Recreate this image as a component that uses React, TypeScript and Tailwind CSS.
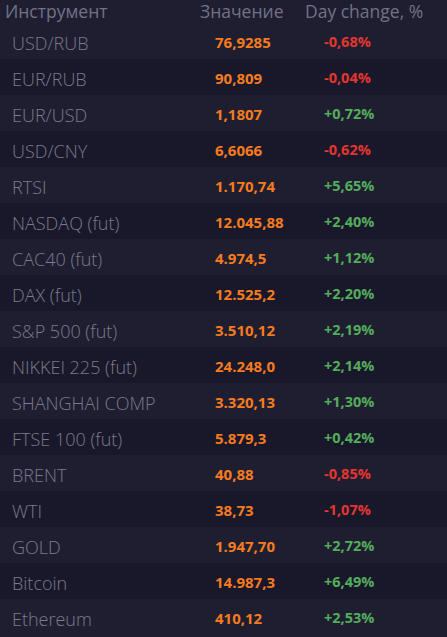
const rows: [string, string, string][] = [
  ['USD/RUB', '76,9285', '-0,68%'],
  ['EUR/RUB', '90,809', '-0,04%'],
  ['EUR/USD', '1,1807', '+0,72%'],
  ['USD/CNY', '6,6066', '-0,62%'],
  ['RTSI', '1.170,74', '+5,65%'],
  ['NASDAQ (fut)', '12.045,88', '+2,40%'],
  ['CAC40 (fut)', '4.974,5', '+1,12%'],
  ['DAX (fut)', '12.525,2', '+2,20%'],
  ['S&P 500 (fut)', '3.510,12', '+2,19%'],
  ['NIKKEI 225 (fut)', '24.248,0', '+2,14%'],
  ['SHANGHAI COMP', '3.320,13', '+1,30%'],
  ['FTSE 100 (fut)', '5.879,3', '+0,42%'],
  ['BRENT', '40,88', '-0,85%'],
  ['WTI', '38,73', '-1,07%'],
  ['GOLD', '1.947,70', '+2,72%'],
  ['Bitcoin', '14.987,3', '+6,49%'],
  ['Ethereum', '410,12', '+2,53%'],
];

export default function App() {
  return (
    <div className="w-[447px] h-[637px] bg-[#1f1e31] overflow-hidden">

      {/* HEADER */}
      <div className="flex h-[23px] items-center text-[17.5px] leading-none text-[#727286] font-['Open_Sans',sans-serif]">
        <div className="w-[200px] pl-[5px]">Инструмент</div>
        <div className="w-[105px]">Значение</div>
        <div>Day change, %</div>
      </div>

      {/* ROWS */}
      {rows.map(([name, value, change], i) => (
        <div
          key={name}
          className={
            'flex h-[36px] items-center pt-[3px] ' +
            (i % 2 === 0 ? 'bg-[#1f1e31]' : 'bg-[#19182a]')
          }
        >
          <div className="w-[215px] pl-[12px] text-[18px] leading-none font-light text-[#7a7a8c] font-['Open_Sans',sans-serif]">
            {name}
          </div>
          <div className="w-[109px] text-[15px] leading-none font-bold text-[#f57b1e] font-['Open_Sans',sans-serif]">
            {value}
          </div>
          <div
            className={
              'text-[14.5px] leading-none font-bold font-[\'Open_Sans\',sans-serif] ' +
              (change.startsWith('-') ? 'text-[#e2362f]' : 'text-[#53ad5b]')
            }
          >
            {change}
          </div>
        </div>
      ))}

    </div>
  );
}
